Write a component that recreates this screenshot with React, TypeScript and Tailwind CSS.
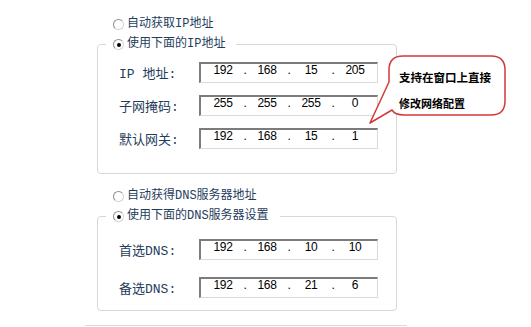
import React, { Fragment } from "react";

const labelFont = "font-['Liberation_Mono','Noto_Sans_CJK_SC',monospace]";

function Radio({ checked, label }: { checked?: boolean; label: string }) {
  return (
    <div className="flex items-center h-[13px]">
      <span className="w-[11px] h-[11px] rounded-full border border-[#8e8e8e] border-r-[#d4d4d4] border-b-[#d4d4d4] bg-white flex items-center justify-center shrink-0">
        {checked && <span className="w-[4px] h-[4px] rounded-full bg-black" />}
      </span>
      <span className={`ml-[3px] text-[12px] leading-[13px] text-[#1f3d5c] whitespace-nowrap ${labelFont}`}>
        {label}
      </span>
    </div>
  );
}

function IpBox({ parts }: { parts: string[] }) {
  return (
    <div className="w-[179px] h-[21px] bg-white border-t-2 border-l-2 border-r border-b border-t-[#7c7c7c] border-l-[#7c7c7c] border-r-[#dadada] border-b-[#dadada] flex items-start pl-[2px] font-['Liberation_Sans',sans-serif] text-[12px] leading-[13px] text-black tracking-[-0.4px]">
      {parts.map((p, i) => (
        <Fragment key={i}>
          {i > 0 && <span className="w-[4px] text-center">.</span>}
          <span className="w-[40px] text-center">{p}</span>
        </Fragment>
      ))}
    </div>
  );
}

function Row({ label, parts }: { label: string; parts: string[] }) {
  return (
    <div className="flex items-center">
      <span className={`w-[80px] pt-[3px] text-[13px] leading-[15px] text-[#1f3d5c] whitespace-nowrap ${labelFont}`}>
        {label}
      </span>
      <IpBox parts={parts} />
    </div>
  );
}

export default function App() {
  return (
    <div className="relative w-[531px] h-[327px] bg-white overflow-hidden flex flex-col pt-[18px]">
      <div className="ml-[97px] w-[300px] flex flex-col">
        <div className="pl-[16px]">
          <Radio label="自动获取IP地址" />
        </div>
        <fieldset className="mt-[7px] m-0 p-0 border border-[#d3d8dc] rounded-[4px] w-[300px] min-w-0">
          <legend className="ml-[8px] pl-[7px] pr-[11px] p-0">
            <Radio checked label="使用下面的IP地址" />
          </legend>
          <div className="flex flex-col gap-[12px] pt-[11px] pb-[24px] pl-[21px]">
            <Row label="IP 地址:" parts={["192", "168", "15", "205"]} />
            <Row label="子网掩码:" parts={["255", "255", "255", "0"]} />
            <Row label="默认网关:" parts={["192", "168", "15", "1"]} />
          </div>
        </fieldset>

        <div className="pl-[16px] mt-[16px]">
          <Radio label="自动获得DNS服务器地址" />
        </div>
        <fieldset className="mt-[7px] m-0 p-0 border border-[#d3d8dc] rounded-[4px] w-[300px] min-w-0">
          <legend className="ml-[8px] pl-[7px] pr-[11px] p-0">
            <Radio checked label="使用下面的DNS服务器设置" />
          </legend>
          <div className="flex flex-col gap-[17px] pt-[16px] pb-[12px] pl-[21px]">
            <Row label="首选DNS:" parts={["192", "168", "10", "10"]} />
            <Row label="备选DNS:" parts={["192", "168", "21", "6"]} />
          </div>
        </fieldset>
      </div>

      <div className="ml-[85px] mt-[14px] w-[322px] border-t border-[#d8dcdf]" />

      {/* Callout bubble */}
      <div className="absolute left-[366px] top-[52px] w-[144px] h-[76px]">
        <svg width="144" height="76" viewBox="0 0 144 76" className="absolute inset-0">
          <path
            d="M 23 30 L 23 18 Q 23 4 37 4 L 125 4 Q 139 4 139 18 L 139 49 Q 139 63 125 63 L 38 63 Q 29 63 26 58 L 4 71 L 23 30 Z"
            fill="white"
            stroke="#d23a3a"
            strokeWidth="1.5"
            strokeLinejoin="round"
          />
        </svg>
        <div className="absolute left-[33px] top-[18px] flex flex-col gap-[12px] font-['Noto_Sans_CJK_SC',sans-serif] font-bold text-black whitespace-nowrap">
          <span className="text-[11.5px] leading-[14px]">支持在窗口上直接</span>
          <span className="text-[11px] leading-[14px]">修改网络配置</span>
        </div>
      </div>
    </div>
  );
}
